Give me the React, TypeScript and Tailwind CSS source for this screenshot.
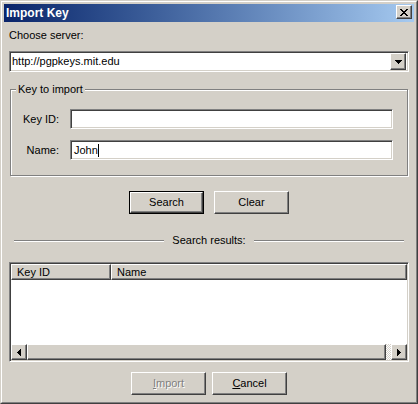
import React from 'react';

const raised =
  'border border-t-white border-l-white border-r-[#404040] border-b-[#404040] shadow-[inset_-1px_-1px_0_#808080]';
const sunken =
  'border border-t-[#808080] border-l-[#808080] border-r-white border-b-white shadow-[inset_1px_1px_0_#404040,inset_-1px_-1px_0_#d4d0c8]';

const TriangleDown = () => (
  <svg width="7" height="4" viewBox="0 0 7 4" shapeRendering="crispEdges">
    <path d="M0 0h7v1h-1v1h-1v1h-1v1h-1v-1h-1v-1h-1v-1h-1z" fill="#000" />
  </svg>
);

const TriangleLeft = () => (
  <svg width="4" height="7" viewBox="0 0 4 7" shapeRendering="crispEdges">
    <path d="M3 0h1v7h-1v-1h-1v-1h-1v-1h-1v-1h1v-1h1v-1h1z" fill="#000" />
  </svg>
);

const TriangleRight = () => (
  <svg width="4" height="7" viewBox="0 0 4 7" shapeRendering="crispEdges">
    <path d="M0 0h1v1h1v1h1v1h1v1h-1v1h-1v1h-1v1h-1z" fill="#000" />
  </svg>
);

const Button: React.FC<{ children: React.ReactNode; isDefault?: boolean; disabled?: boolean }> = ({
  children,
  isDefault,
  disabled,
}) => {
  const inner = (
    <div
      className={`flex items-center justify-center h-full w-full ${raised} ${
        disabled ? 'text-[#808080] [text-shadow:1px_1px_0_#fff]' : 'text-black'
      }`}
    >
      {children}
    </div>
  );
  if (isDefault) {
    return <div className="w-[75px] h-[23px] border border-black">{inner}</div>;
  }
  return <div className="w-[75px] h-[23px]">{inner}</div>;
};

const TextField: React.FC<{ value?: string; caret?: boolean }> = ({ value, caret }) => (
  <div className={`flex-1 h-[20px] bg-white flex items-center pl-[3px] ${sunken}`}>
    <span className="leading-[13px]">{value}</span>
    {caret && <span className="w-px h-[13px] bg-black" />}
  </div>
);

export default function App() {
  return (
    <div className="w-[418px] h-[404px] bg-[#d4d0c8] font-['Liberation_Sans',Arial,sans-serif] text-[11px] text-black leading-[13px] select-none">
      <div className="w-full h-full border border-t-[#d4d0c8] border-l-[#d4d0c8] border-r-[#404040] border-b-[#404040]">
        <div className="w-full h-full border border-t-white border-l-white border-r-[#808080] border-b-[#808080] p-[2px] flex flex-col">
          {/* title bar */}
          <div className="h-[18px] flex items-start justify-between bg-gradient-to-r from-[#0a246a] to-[#a6caf0]">
            <div className="pl-[2px] h-full flex items-center text-white font-bold text-[12px]">Import Key</div>
            <div className={`mt-px mr-[2px] w-[16px] h-[14px] bg-[#d4d0c8] flex items-center justify-center ${raised}`}>
              <svg width="8" height="7" viewBox="0 0 8 7" shapeRendering="crispEdges">
                <path
                  d="M0 0h2v1h1v1h2v-1h1v-1h2v1h-1v1h-1v1h-1v1h1v1h1v1h1v1h-2v-1h-1v-1h-2v1h-1v1h-2v-1h1v-1h1v-1h1v-1h-1v-1h-1v-1h-1z"
                  fill="#000"
                />
              </svg>
            </div>
          </div>

          {/* content */}
          <div className="flex flex-col px-[5px]">
            <div className="mt-[7px] h-[13px]">Choose server:</div>

            <div className={`mt-[9px] h-[21px] bg-white flex items-center ${sunken}`}>
              <div className="flex-1 pl-[2px]">http://pgpkeys.mit.edu</div>
              <div className={`w-[16px] h-[17px] mr-[2px] bg-[#d4d0c8] flex items-center justify-center ${raised}`}>
                <TriangleDown />
              </div>
            </div>

            {/* group box */}
            <div className="relative mt-[17px] mx-px border border-[#808080] shadow-[1px_1px_0_#fff,inset_1px_1px_0_#fff] pt-[19px] pb-[15px] pr-[14px] flex flex-col gap-[11px]">
              <div className="absolute left-[5px] top-[-7px] px-[2px] bg-[#d4d0c8]">Key to import</div>
              <div className="flex items-center">
                <div className="w-[49px] text-right pr-px">Key ID:</div>
                <div className="w-[10px]" />
                <TextField />
              </div>
              <div className="flex items-center">
                <div className="w-[49px] text-right pr-px">Name:</div>
                <div className="w-[10px]" />
                <TextField value="John" caret />
              </div>
            </div>

            {/* search / clear */}
            <div className="mt-[15px] flex justify-center gap-[10px]">
              <Button isDefault>Search</Button>
              <Button>Clear</Button>
            </div>

            {/* separator */}
            <div className="mt-[20px] h-[13px] flex items-center px-[5px]">
              <div className="flex-1 h-[2px] border-t border-t-[#808080] border-b border-b-white" />
              <div className="px-[8px]">Search results:</div>
              <div className="flex-1 h-[2px] border-t border-t-[#808080] border-b border-b-white" />
            </div>

            {/* list view */}
            <div className={`mt-[15px] h-[100px] flex flex-col ${sunken} p-px`}>
              <div className="h-[16px] flex">
                <div className={`w-[100px] h-full flex items-center pl-[5px] ${raised}`}>Key ID</div>
                <div className={`flex-1 h-full flex items-center pl-[5px] ${raised}`}>Name</div>
              </div>
              <div className="flex-1 bg-white" />
              <div className="h-[16px] flex">
                <div className={`w-[16px] h-full flex items-center justify-center ${raised}`}>
                  <TriangleLeft />
                </div>
                <div className={`flex-1 h-full ${raised}`} />
                <div className="w-[5px] h-full bg-[conic-gradient(#fff_25%,#d4d0c8_0_50%,#fff_0_75%,#d4d0c8_0)] bg-[length:2px_2px]" />
                <div className={`w-[16px] h-full flex items-center justify-center ${raised}`}>
                  <TriangleRight />
                </div>
              </div>
            </div>

            {/* bottom buttons */}
            <div className="mt-[10px] flex justify-center gap-[6px]">
              <Button disabled>
                <span>
                  <span className="underline">I</span>mport
                </span>
              </Button>
              <Button>
                <span>
                  <span className="underline">C</span>ancel
                </span>
              </Button>
            </div>
          </div>
        </div>
      </div>
    </div>
  );
}
